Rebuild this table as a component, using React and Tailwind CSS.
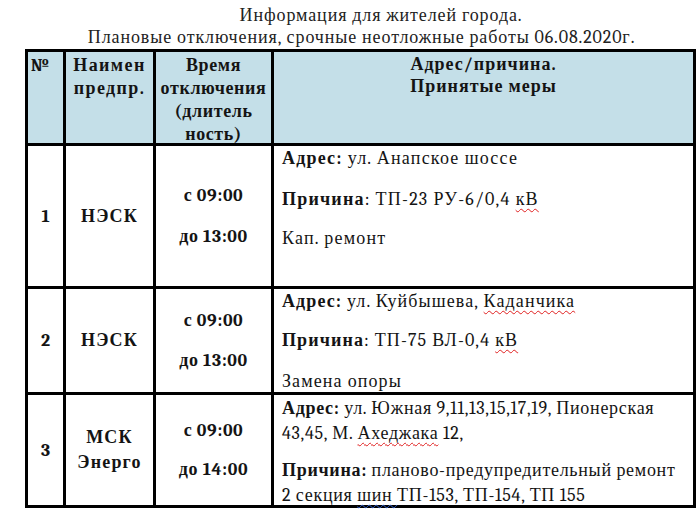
const Wavy = ({ color = "red", children }) => (
  <span
    className={
      color === "red"
        ? "underline decoration-wavy decoration-[#e02020] decoration-1 underline-offset-[3px]"
        : "underline decoration-wavy decoration-[#3060d0] decoration-1 underline-offset-[3px]"
    }
  >
    {children}
  </span>
);

const rows = [
  {
    n: "1",
    org: ["НЭСК"],
    from: "с 09:00",
    to: "до 13:00",
    gap: "mt-[17px]",
    h: "h-[143px]",
    info: (
      <div className="pt-[1px] -mb-[6px] tracking-[1.2px]">
        <p className="leading-[24px]">
          <b>Адрес:</b> ул. Анапское шоссе
        </p>
        <p className="leading-[24px] mt-[17px]">
          <b>Причина</b>: ТП-23 РУ-6/0,4 <Wavy>кВ</Wavy>
        </p>
        <p className="leading-[24px] mt-[15px]">Кап. ремонт</p>
      </div>
    ),
  },
  {
    n: "2",
    org: ["НЭСК"],
    from: "с 09:00",
    to: "до 13:00",
    gap: "mt-[16px]",
    h: "h-[106px]",
    info: (
      <div className="pt-[1px] -mb-[6px] tracking-[1.1px]">
        <p className="leading-[24px]">
          <b>Адрес:</b> ул. Куйбышева, <Wavy>Каданчика</Wavy>
        </p>
        <p className="leading-[24px] mt-[15px]">
          <b>Причина</b>: ТП-75 ВЛ-0,4 <Wavy>кВ</Wavy>
        </p>
        <p className="leading-[24px] mt-[17px]">Замена опоры</p>
      </div>
    ),
  },
  {
    n: "3",
    org: ["МСК", "Энерго"],
    from: "с 09:00",
    to: "до 14:00",
    gap: "mt-[15px]",
    h: "h-[113px]",
    info: (
      <div className="pt-[1px] -mb-[6px] whitespace-nowrap tracking-[0.7px]">
        <p className="leading-[25px]">
          <b>Адрес:</b> ул. Южная 9,11,13,15,17,19, Пионерская
          <br />
          43,45, М. <Wavy>Ахеджака</Wavy> 12,
        </p>
        <p className="leading-[25px] mt-[12px]">
          <b>Причина:</b> планово-предупредительный ремонт
          <br />2 секция <Wavy color="blue">шин </Wavy> ТП-153, ТП-154, ТП 155
        </p>
      </div>
    ),
  },
];

export default function App() {
  return (
    <div className="w-[700px] h-[525px] bg-white text-[#141414] overflow-hidden font-serif">
      <div className="pt-[5px] pl-[23px] text-center text-[18px] leading-[22px] tracking-[0.9px] text-[#222]">
        <div className="pl-[39px]">Информация для жителей города.</div>
        <div>Плановые отключения, срочные неотложные работы 06.08.2020г.</div>
      </div>
      <table className="ml-[25px] w-[671px] table-fixed border-collapse text-[18px] font-serif">
        <colgroup>
          <col className="w-[38px]" />
          <col className="w-[90px]" />
          <col className="w-[118px]" />
          <col />
        </colgroup>
        <thead>
          <tr className="h-[94px] bg-[#c4dfe8] font-bold text-center align-top">
            <th className="border-[3px] border-black pt-[2px] pb-0 pl-[3px] pr-0 text-left">
              <div className="leading-[23px] -mb-[6px]">№</div>
            </th>
            <th className="border-[3px] border-black pt-[2px] pb-0 px-0">
              <div className="leading-[23px] tracking-[1.4px] -mb-[6px]">
                Наимен
                <br />
                предпр.
              </div>
            </th>
            <th className="border-[3px] border-black pt-[2px] pb-0 px-0">
              <div className="leading-[23px] tracking-[0.6px] -mb-[6px]">
                Время
                <br />
                отключения
                <br />
                (длитель
                <br />
                ность)
              </div>
            </th>
            <th className="border-[3px] border-black pt-[2px] pb-0 px-0">
              <div className="leading-[22px] tracking-[1px] -mb-[6px]">
                Адрес/причина.
                <br />
                Принятые меры
              </div>
            </th>
          </tr>
        </thead>
        <tbody>
          {rows.map((r) => (
            <tr key={r.n} className={r.h}>
              <td className="border-[3px] border-black text-center font-bold align-middle py-0 px-0">{r.n}</td>
              <td className="border-[3px] border-black text-center font-bold align-middle leading-[25px] tracking-[1.2px] py-0 px-0">
                {r.org.map((o) => (
                  <div key={o}>{o}</div>
                ))}
              </td>
              <td className="border-[3px] border-black text-center font-bold align-middle tracking-[0.6px] py-0 px-0">
                <div className="leading-[24px]">{r.from}</div>
                <div className={"leading-[24px] " + r.gap}>{r.to}</div>
              </td>
              <td className="border-[3px] border-black align-top py-0 pl-[8px] pr-[2px]">{r.info}</td>
            </tr>
          ))}
        </tbody>
      </table>
    </div>
  );
}
